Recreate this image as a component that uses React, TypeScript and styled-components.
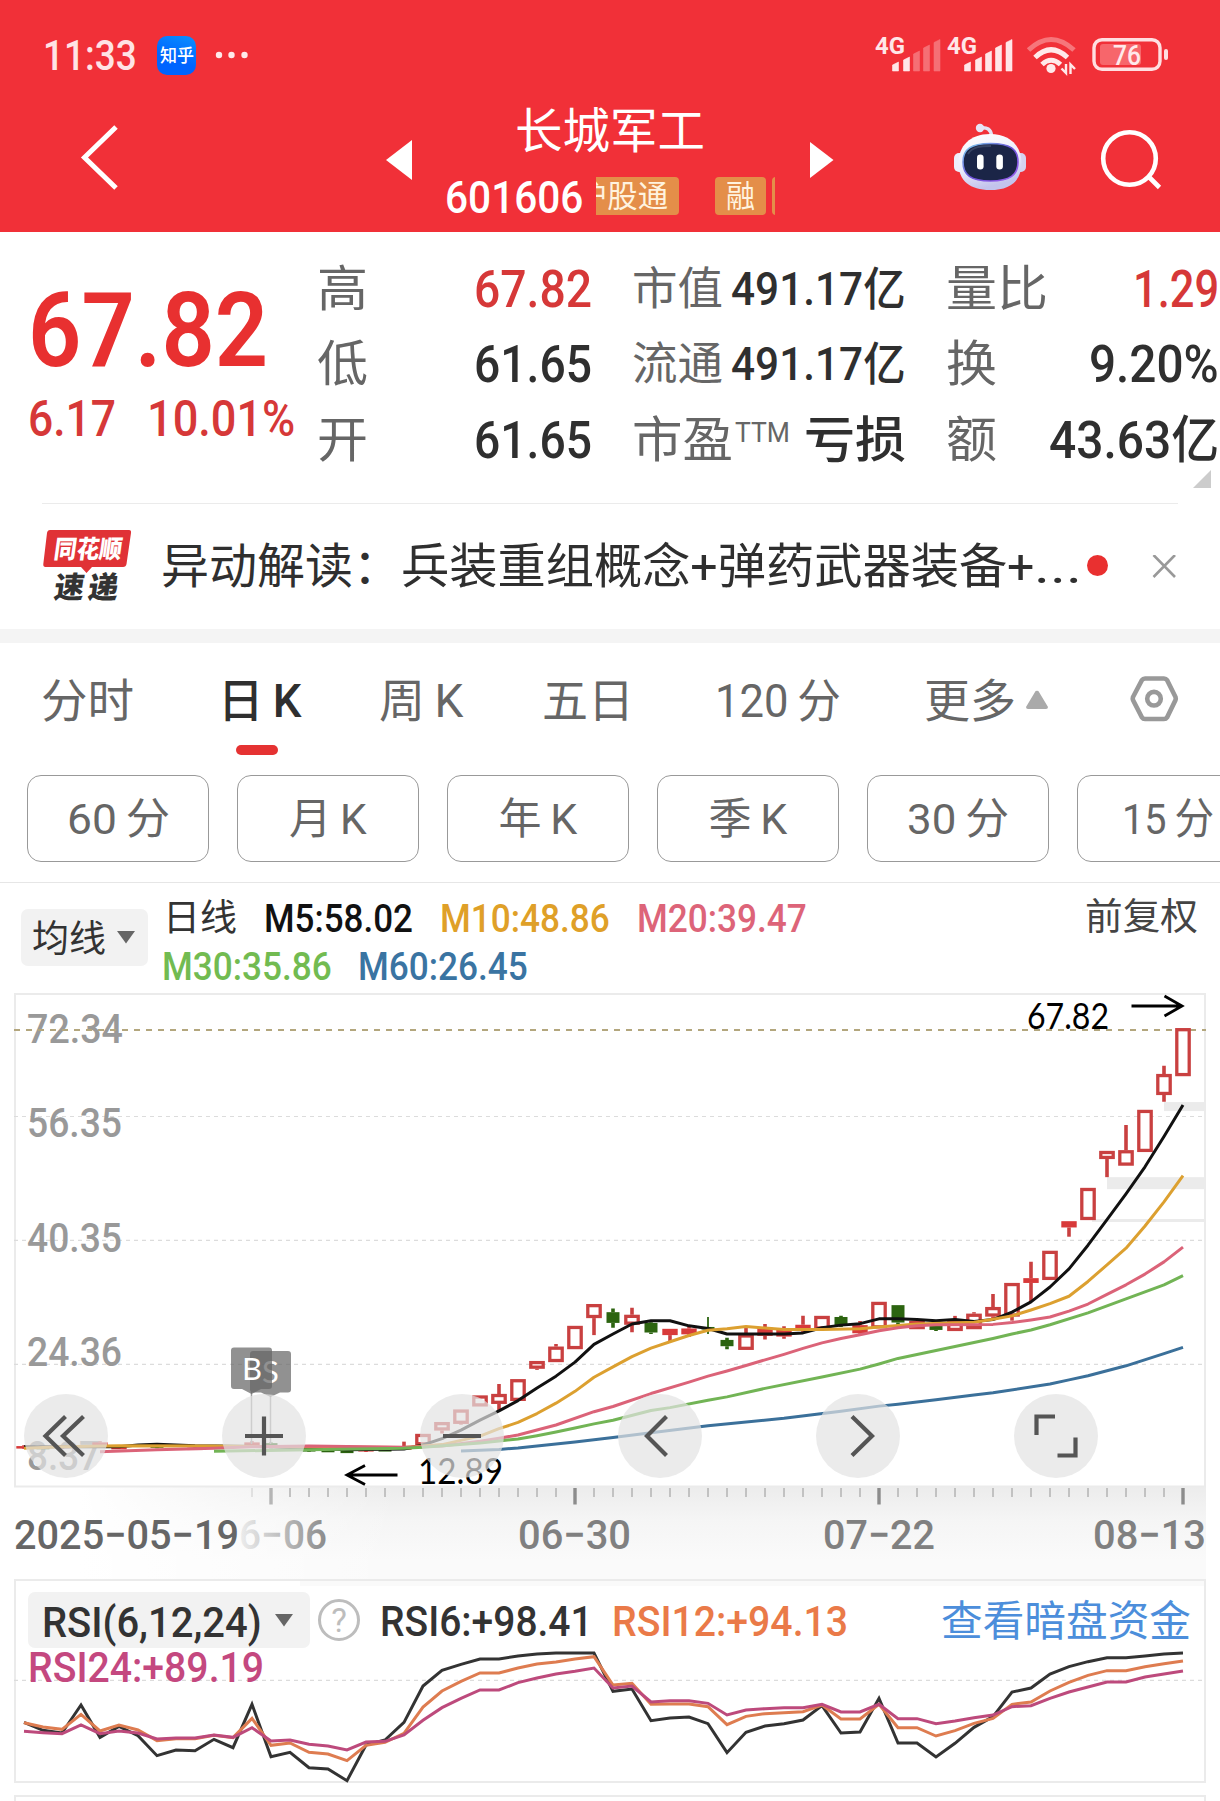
import React, { useLayoutEffect, useRef, useState } from 'react';
import styled, { createGlobalStyle } from 'styled-components';

const FONT = `Roboto, "Noto Sans CJK SC", sans-serif`;

const GlobalStyle = createGlobalStyle`
  body {
    margin: 0;
    background: #fff;
    font-family: ${FONT};
    color: #333;
  }
`;

/* ---------- text fitted to a fixed advance width ---------- */

const FitBox = styled.span<{ $w: number; $size: number; $weight: number; $color: string; $lh: number }>`
  display: block;
  flex: none;
  width: ${p => p.$w}px;
  height: ${p => p.$lh}px;
  line-height: ${p => p.$lh}px;
  font-size: ${p => p.$size}px;
  font-weight: ${p => p.$weight};
  color: ${p => p.$color};
  white-space: nowrap;
`;

const FitInner = styled.span`
  display: inline-block;
  transform-origin: 0 50%;
`;

interface FitProps {
  w: number;
  size: number;
  weight?: number;
  color?: string;
  lh?: number;
  dy?: number;
  children: string;
}

function Fit({ w, size, weight = 400, color = '#333', lh = 50, dy = 2, children }: FitProps) {
  const ref = useRef<HTMLSpanElement>(null);
  const [scale, setScale] = useState(1);
  useLayoutEffect(() => {
    if (ref.current) setScale(w / ref.current.offsetWidth);
  }, [w, size, children]);
  return (
    <FitBox $w={w} $size={size} $weight={weight} $color={color} $lh={lh}>
      <FitInner ref={ref} style={{ transform: `translateY(${dy}px) scaleX(${scale})` }}>{children}</FitInner>
    </FitBox>
  );
}

/* ---------- page ---------- */

const Page = styled.main`
  width: 1220px;
  height: 1801px;
  overflow: hidden;
  background: #fff;
`;

const Header = styled.header`
  height: 232px;
  background: #f13038;
  color: #fff;
`;

const StatusBar = styled.div`
  display: flex;
  align-items: center;
  height: 110px;
  padding-left: 43px;
`;

const AppBadge = styled.span`
  display: flex;
  align-items: center;
  justify-content: center;
  width: 39px;
  height: 39px;
  margin: 0 19px 0 20px;
  border-radius: 10px;
  background: linear-gradient(200deg, #0a90ff, #0064ff 60%);
`;

const StatusIcons = styled.svg`
  margin-left: auto;
`;

const NavBar = styled.nav`
  display: flex;
  height: 122px;
`;

const TitleBlock = styled.div`
  width: 332px;
  margin: 0 34px 0 31px;
`;

const TitleRow = styled.div`
  display: flex;
  justify-content: center;
  margin-top: -7px;
  height: 58px;
`;

const CodeRow = styled.div`
  display: flex;
  align-items: center;
  height: 70px;
  gap: 13px;
  padding-left: 1px;
`;

const TagStrip = styled.div`
  display: flex;
  width: 179px;
  overflow: hidden;
`;

const Tag = styled.span<{ $ml?: number }>`
  flex: none;
  padding: 0 11px;
  margin-left: ${p => p.$ml ?? 0}px;
  border-radius: 4px;
  background: #e48e49;
`;

const Block = styled.svg`
  display: block;
  flex: none;
`;

/* ---------- quote ---------- */

const Quote = styled.section`
  position: relative;
  display: flex;
  height: 271px;
`;

const PriceBlock = styled.div`
  width: 289px;
  padding: 57px 0 0 28px;
`;

const ChangeRow = styled.div`
  display: flex;
  gap: 31px;
  margin-top: 23px;
`;

const Metrics = styled.div`
  display: flex;
  gap: 40px;
  padding-top: 18px;
`;

const MetricColumn = styled.div<{ $w: number }>`
  width: ${p => p.$w}px;
`;

const Metric = styled.div`
  display: flex;
  align-items: center;
  justify-content: space-between;
  height: 75.5px;
`;

const MetricLabel = styled.span`
  display: flex;
  gap: 2px;
`;

const Superscript = styled.span`
  margin-top: -8px;
`;

const Corner = styled.svg`
  position: absolute;
  right: 9px;
  bottom: 15px;
`;

/* ---------- news ---------- */

const News = styled.section`
  display: flex;
  align-items: center;
  height: 125px;
  margin-left: 42px;
  margin-right: 42px;
  border-top: 1px solid #ebebeb;
`;

const NewsText = styled.div`
  display: flex;
  margin: -4px 5px 0 29px;
`;

const Dot = styled.span`
  width: 21px;
  height: 21px;
  margin-top: -2px;
  border-radius: 50%;
  background: #e93030;
`;

const Band = styled.div`
  height: 14px;
  background: #f4f4f4;
`;

/* ---------- tabs ---------- */

const Tabs = styled.div`
  display: flex;
  height: 132px;
  padding-left: 41px;
`;

const Tab = styled.div<{ $gap: number }>`
  display: flex;
  flex-direction: column;
  align-items: center;
  margin-left: ${p => p.$gap}px;
  padding-top: 31px;
`;

const MoreTab = styled.div`
  display: flex;
  gap: 10px;
  margin-left: 83px;
  padding-top: 31px;
`;

const Indicator = styled.span`
  width: 42px;
  height: 10px;
  margin-top: 21px;
  margin-right: 6px;
  border-radius: 5px;
  background: #e53232;
`;

const Pills = styled.div`
  display: flex;
  gap: 28px;
  height: 107px;
  padding-left: 27px;
  overflow: hidden;
  border-bottom: 1px solid #e6e6e6;
`;

const Pill = styled.div`
  display: flex;
  flex: none;
  align-items: center;
  justify-content: center;
  box-sizing: border-box;
  width: 182px;
  height: 87px;
  padding-bottom: 3px;
  border: 1px solid #999;
  border-radius: 14px;
`;

/* ---------- legend ---------- */

const Legend = styled.div`
  display: flex;
  height: 110px;
`;

const Chip = styled.div<{ $w: number; $h: number }>`
  display: flex;
  align-items: center;
  box-sizing: border-box;
  flex: none;
  width: ${p => p.$w}px;
  height: ${p => p.$h}px;
  border-radius: 7px;
  background: #f2f2f2;
`;

const MaChip = styled(Chip)`
  gap: 11px;
  margin: 26px 14px 0 21px;
  padding-left: 11px;
`;

const LegendLines = styled.div`
  flex: 1;
  padding-top: 10px;
`;

const LegendLine = styled.div<{ $pad?: number; $gap?: number }>`
  display: flex;
  gap: ${p => p.$gap ?? 25}px;
  padding-left: ${p => p.$pad ?? 0}px;
`;

const Adjust = styled.div`
  padding: 8px 22px 0 0;
`;

/* ---------- charts ---------- */

const ChartArea = styled.section`
  position: relative;
  height: 586px;
`;

const ControlBar = styled.div`
  position: absolute;
  left: 24px;
  top: 401px;
  display: flex;
  gap: 114px;
`;

const RoundButton = styled.button`
  width: 84px;
  height: 84px;
  padding: 0;
  border: 0;
  border-radius: 50%;
  background: rgba(227, 227, 227, 0.7);
`;

const RsiPanel = styled.section`
  position: relative;
  box-sizing: border-box;
  width: 1192px;
  height: 204px;
  margin-left: 14px;
  border: 2px solid #ebebeb;
`;

const RsiPlot = styled.svg`
  position: absolute;
  left: -16px;
  top: -2px;
`;

const RsiHeader = styled.div`
  position: relative;
  display: flex;
  align-items: center;
  height: 56px;
  margin-top: 11px;
  padding-left: 12px;
`;

const RsiChip = styled(Chip)`
  gap: 13px;
  padding-left: 14px;
  margin-right: 8px;
`;

const Help = styled.span`
  box-sizing: border-box;
  width: 42px;
  height: 42px;
  margin-right: 20px;
  border: 3px solid #bdbdbd;
  border-radius: 50%;
  color: #bdbdbd;
  font-size: 33px;
  line-height: 38px;
  text-align: center;
`;

const LinkText = styled.a`
  margin-left: auto;
  margin-right: 13px;
`;

const RsiSecond = styled.div`
  position: relative;
  padding-left: 12px;
  margin-top: -5px;
`;

const NextPanel = styled.div`
  width: 1188px;
  height: 20px;
  margin: 12px 0 0 14px;
  border: 2px solid #ebebeb;
`;

const GRAY = '#666';
const DARK = '#2f2f2f';
const UP = '#c94040';
const DOWN = '#2c6410';

const xAt = (i: number) => 24 + 19 * i;
const yAt = (v: number) => 980 + v / 2.7034;
const yRsi = (v: number) => 1560 + v / 3;

type Candle = [number, number, number, number, number, ('u' | 's' | 'd')];
// index, body top, body bottom, wick top, wick bottom, kind: hollow up, solid up, down
const candles: Candle[] = [
  [0, 1260, 1266, 1258, 1268, 's'], [1, 1262, 1266, 1260, 1268, 'd'], [2, 1259, 1263, 1258, 1266, 's'],
  [4, 1250, 1262, 1247, 1264, 's'], [5, 1262, 1266, 1260, 1268, 's'], [7, 1258, 1262, 1257, 1266, 'd'],
  [9, 1264, 1268, 1262, 1270, 's'], [12, 1250, 1262, 1247, 1264, 's'], [13, 1252, 1262, 1250, 1266, 'd'],
  [15, 1268, 1273, 1266, 1275, 'd'], [16, 1270, 1274, 1268, 1274, 'd'], [17, 1272, 1279, 1270, 1279, 'd'],
  [18, 1268, 1272, 1266, 1276, 's'], [19, 1268, 1272, 1266, 1273, 'd'], [20, 1262, 1270, 1248, 1270, 's'],
  [21, 1227, 1258, 1227, 1258, 'u'], [22, 1195, 1218, 1195, 1226, 'u'], [23, 1161, 1200, 1161, 1202, 'u'],
  [24, 1123, 1153, 1123, 1153, 'u'], [25, 1119, 1146, 1092, 1165, 'u'], [26, 1079, 1138, 1079, 1138, 'u'],
  [27, 1030, 1051, 1030, 1054, 'u'], [28, 991, 1033, 984, 1033, 'u'], [29, 935, 998, 935, 998, 'u'],
  [30, 876, 914, 876, 960, 'u'], [31, 898, 927, 888, 940, 'd'], [32, 905, 932, 886, 952, 'u'],
  [33, 927, 953, 925, 957, 'd'], [34, 943, 960, 943, 977, 's'], [35, 942, 958, 938, 965, 's'],
  [36, 938, 944, 911, 957, 'd'], [37, 973, 990, 967, 998, 'd'], [38, 958, 1000, 940, 1000, 'u'],
  [39, 940, 962, 930, 972, 's'], [40, 943, 964, 936, 970, 's'], [41, 932, 945, 908, 955, 's'],
  [42, 908, 945, 908, 945, 'u'], [43, 911, 933, 908, 938, 'd'], [44, 933, 955, 922, 960, 's'],
  [45, 870, 942, 870, 942, 'u'], [46, 879, 926, 879, 933, 'd'], [47, 922, 944, 922, 944, 'u'],
  [48, 932, 946, 930, 949, 'd'], [49, 922, 949, 908, 949, 'u'], [50, 902, 944, 898, 944, 'u'],
  [51, 884, 910, 849, 915, 'u'], [52, 819, 910, 819, 921, 'u'], [53, 806, 819, 762, 868, 's'],
  [54, 732, 811, 732, 811, 'u'], [55, 652, 669, 652, 694, 's'], [56, 562, 649, 562, 649, 'u'],
  [57, 462, 484, 462, 533, 'u'], [58, 460, 502, 392, 502, 'u'], [59, 351, 465, 351, 465, 'u'],
  [60, 254, 311, 232, 329, 'u'], [61, 130, 260, 130, 260, 'u'],
];

type Pt = [number, number];
const averages: { color: string; pts: Pt[] }[] = [
  { color: '#111', pts: [[0, 1262], [5, 1262], [6, 1257], [7, 1255], [9, 1259], [13, 1262], [17, 1270], [20, 1268], [21, 1257], [22, 1240], [23, 1217], [24, 1190], [25, 1165], [26, 1137], [27, 1103], [28, 1071], [29, 1033], [30, 985], [31, 957], [32, 930], [33, 921], [34, 921], [35, 935], [36, 942], [37, 957], [40, 957], [41, 954], [42, 940], [43, 933], [44, 929], [45, 916], [46, 916], [47, 918], [48, 921], [49, 918], [50, 923], [51, 918], [52, 898], [53, 870], [54, 830], [55, 781], [56, 717], [57, 648], [58, 578], [59, 505], [60, 423], [61, 338]] },
  { color: '#dca030', pts: [[0, 1266], [2, 1262], [5, 1259], [10, 1260], [20, 1264], [22, 1256], [24, 1233], [25, 1213], [26, 1196], [27, 1172], [28, 1144], [29, 1112], [30, 1074], [31, 1046], [32, 1018], [33, 995], [34, 978], [35, 961], [36, 947], [37, 943], [38, 937], [39, 941], [40, 945], [42, 945], [44, 943], [45, 938], [47, 930], [50, 925], [51, 917], [52, 908], [53, 892], [54, 875], [55, 855], [56, 815], [57, 770], [58, 725], [59, 665], [60, 600], [61, 529]] },
  { color: '#db6378', pts: [[4, 1275], [7, 1270], [10, 1266], [12, 1262], [15, 1260], [20, 1263], [22, 1260], [24, 1247], [25, 1239], [26, 1230], [28, 1203], [30, 1167], [31, 1153], [33, 1118], [35, 1087], [36, 1071], [37, 1057], [38, 1042], [39, 1027], [40, 1012], [41, 996], [42, 981], [43, 969], [44, 959], [45, 948], [46, 940], [47, 935], [48, 932], [51, 931], [52, 926], [53, 919], [54, 911], [55, 895], [56, 876], [57, 850], [58, 824], [59, 795], [60, 762], [61, 722]] },
  { color: '#72b455', pts: [[10, 1274], [15, 1270], [20, 1266], [21, 1263], [24, 1252], [25, 1246], [26, 1241], [27, 1232], [28, 1222], [29, 1211], [30, 1200], [31, 1190], [33, 1164], [34, 1156], [36, 1136], [37, 1127], [39, 1104], [42, 1073], [44, 1052], [45, 1038], [46, 1023], [50, 980], [51, 969], [52, 957], [53, 946], [54, 932], [56, 900], [58, 862], [60, 824], [61, 799]] },
  { color: '#3b709a', pts: [[23, 1273], [25, 1269], [26, 1265], [29, 1249], [31, 1237], [33, 1224], [36, 1205], [40, 1185], [43, 1166], [45, 1152], [46, 1147], [48, 1135], [50, 1122], [51, 1116], [54, 1092], [55, 1081], [56, 1070], [58, 1043], [60, 1010], [61, 993]] },
];

const rsi = [
  { color: '#333', values: [487, 511, 519, 435, 532, 499, 527, 587, 570, 572, 538, 563, 433, 590, 577, 623, 627, 662, 555, 540, 487, 378, 331, 313, 297, 297, 288, 282, 279, 279, 279, 394, 387, 482, 474, 471, 491, 578, 517, 498, 491, 480, 437, 519, 516, 415, 549, 549, 591, 550, 502, 470, 396, 384, 342, 320, 305, 293, 293, 288, 282, 279] },
  { color: '#de7c50', values: [488, 501, 508, 463, 513, 495, 510, 542, 536, 536, 526, 533, 475, 556, 549, 577, 582, 602, 556, 547, 520, 441, 393, 364, 339, 339, 324, 312, 306, 297, 290, 375, 370, 433, 432, 432, 440, 494, 469, 461, 458, 455, 435, 477, 477, 433, 503, 503, 528, 512, 490, 475, 433, 426, 393, 367, 346, 332, 332, 320, 311, 303] },
  { color: '#bd4a7c', values: [514, 518, 521, 495, 521, 513, 519, 537, 534, 534, 525, 532, 503, 543, 540, 553, 558, 570, 546, 544, 525, 481, 443, 415, 390, 390, 368, 354, 342, 334, 324, 384, 378, 426, 422, 422, 430, 465, 450, 446, 443, 443, 433, 456, 456, 433, 476, 476, 491, 483, 473, 465, 440, 437, 415, 396, 381, 366, 366, 351, 342, 333] },
];

function StatusGlyphs() {
  const bars = [[0, 62], [11, 57], [21, 51], [31, 45], [41.5, 39.5]];
  const signal = (x: number, strong: number) =>
    bars.map(([dx, top], i) => (
      <path key={`${x}-${i}`} d={`M${x + dx} 71V${top + 3}L${x + dx + 6} ${top}V71Z`} fill="#ffe6e8" stroke="#ffe6e8" strokeWidth="0.6" strokeLinejoin="round" opacity={i < strong ? 1 : 0.35} />
    ));
  return (
    <StatusIcons width="350" height="110" viewBox="870 0 350 110">
      <g fontFamily={FONT} fontWeight="700" fontSize="24" fill="#ffe6e8">
        <text x="875" y="54" textLength="30" lengthAdjust="spacingAndGlyphs">4G</text>
        <text x="947" y="54" textLength="30" lengthAdjust="spacingAndGlyphs">4G</text>
      </g>
      {signal(892.5, 2)}
      {signal(964.5, 5)}
      <g fill="none" stroke="#ffe9ea" strokeWidth="5">
        <path d="M1028.5 50Q1051 29 1074 50" opacity="0.38" />
        <path d="M1035 57.5Q1051 42 1067.500 57.500" />
        <path d="M1042 64.500Q1051 56 1060.500 64.500" />
      </g>
      <circle cx="1051" cy="68.500" r="4.600" fill="#ffe9ea" />
      <path d="M1066 64V73L1061.500 68.500M1070.500 74V64.500L1075 69" fill="none" stroke="#ffe9ea" strokeWidth="2.400" />
      <rect x="1094" y="39.700" width="66" height="29.600" rx="8" fill="none" stroke="#ffdfe1" strokeWidth="3.400" />
      <rect x="1100" y="44" width="41" height="21" rx="3" fill="#f7666b" />
      <rect x="1164" y="49" width="4" height="11" rx="2" fill="#ffdfe1" />
      <text x="1113" y="64.500" fontFamily={FONT} fontSize="27" fontWeight="500" fill="#ffe9ea" textLength="28" lengthAdjust="spacingAndGlyphs">76</text>
    </StatusIcons>
  );
}

function Robot() {
  return (
    <Block width="80" height="122" viewBox="950 110 80 122">
      <defs>
        <linearGradient id="shell" x1="0" y1="0" x2="0.3" y2="1">
          <stop offset="0" stopColor="#fff" />
          <stop offset="0.6" stopColor="#ececfb" />
          <stop offset="1" stopColor="#c3c3ec" />
        </linearGradient>
        <linearGradient id="rim" x1="0" y1="0" x2="1" y2="1">
          <stop offset="0" stopColor="#7ed3ee" />
          <stop offset="0.5" stopColor="#6a50d8" />
          <stop offset="1" stopColor="#a060f0" />
        </linearGradient>
      </defs>
      <path d="M980 128C987 127 991 129 991.500 136" fill="none" stroke="#e4e2f4" strokeWidth="3.600" />
      <circle cx="980" cy="128" r="4.200" fill="#e6e4f6" />
      <rect x="954" y="153" width="12" height="19" rx="5" fill="#eeedfb" />
      <rect x="1014" y="153" width="12" height="19" rx="5" fill="#d5d3f0" />
      <path d="M990 134C1010 134 1021.500 146 1021.500 163C1021.500 181 1010 190 990 190C970 190 958.500 181 958.500 163C958.500 146 970 134 990 134Z" fill="url(#shell)" />
      <path d="M990.500 143.500C1010 143.500 1018 149 1018 162C1018 175 1010 181 990.500 181C971 181 963 175 963 162C963 149 971 143.500 990.500 143.500Z" fill="#1b2547" stroke="url(#rim)" strokeWidth="1.600" />
      <path d="M968 154C972 147 980 146 991 146" fill="none" stroke="#4b5877" strokeWidth="2" opacity="0.6" />
      <rect x="977" y="154.500" width="6.600" height="15" rx="3.300" fill="#fff" />
      <rect x="996.300" y="154.500" width="6.600" height="15" rx="3.300" fill="#fff" />
    </Block>
  );
}

function Kline() {
  const dates: [string, number, number][] = [['06−30', 518, 113], ['07−22', 823, 112], ['08−13', 1093, 113]];
  const prices: [string, number, number][] = [['72.34', 170, 96], ['56.35', 423, 95], ['40.35', 733, 95], ['24.36', 1041, 95], ['8.37', 1322, 73]];
  return (
    <Block width="1220" height="586" viewBox="0 993 1220 586">
      <defs>
        <linearGradient id="shade" x1="0" y1="0" x2="0" y2="1">
          <stop offset="0" stopColor="#ececec" />
          <stop offset="0.35" stopColor="#f5f5f5" />
          <stop offset="0.8" stopColor="#fafafa" />
        </linearGradient>
        <linearGradient id="leftFade" gradientUnits="userSpaceOnUse" x1="80" y1="0" x2="400" y2="0">
          <stop offset="0" stopColor="#fff" />
          <stop offset="1" stopColor="#fff" stopOpacity="0" />
        </linearGradient>
        <linearGradient id="dateFade" gradientUnits="userSpaceOnUse" x1="238" y1="0" x2="326" y2="0">
          <stop offset="0" stopColor="#808080" stopOpacity="0.1" />
          <stop offset="1" stopColor="#808080" stopOpacity="0.9" />
        </linearGradient>
      </defs>
      <rect x="14" y="1487" width="1192" height="92" fill="url(#shade)" />
      <rect x="14" y="1487" width="400" height="92" fill="url(#leftFade)" />
      <rect x="15" y="994" width="1190" height="492.500" fill="none" stroke="#ebebeb" strokeWidth="2" />
      {[369, 704, 1039].map(v => (
        <path key={v} d={`M14 ${yAt(v)}H1204`} stroke="#dcdcdc" strokeWidth="1.200" strokeDasharray="4 4" />
      ))}
      <g fontFamily={FONT} fontSize="41.500" fontWeight="500" fill="#999">
        {prices.map(([t, v, w]) => (
          <text key={t} x="27" y={yAt(v) + 0.5} textLength={w} lengthAdjust="spacingAndGlyphs">{t}</text>
        ))}
      </g>
      <path d={`M14 ${yAt(135)}H1206`} stroke="#b3a67d" strokeWidth="2" strokeDasharray="6 6" />
      <g fill="#ebebeb">
        <rect x="1164" y={yAt(330)} width="42" height="9" />
        <rect x="1107" y={yAt(533)} width="99" height="12" />
        <rect x="1092" y={yAt(646)} width="114" height="3" />
      </g>
      {candles.map(([i, top, bottom, high, low, kind]) => {
        const x = xAt(i);
        const color = kind === 'd' ? DOWN : UP;
        const h = Math.max(2.5, yAt(bottom) - yAt(top));
        return (
          <g key={i}>
            <path d={`M${x} ${yAt(high)}V${yAt(top)}M${x} ${yAt(bottom)}V${yAt(low)}`} stroke={color} strokeWidth={i === 36 ? 1.8 : 3.6} />
            {kind === 'u'
              ? <rect x={x - 6.2} y={yAt(top) + 1.600} width="12.400" height={Math.max(1, h - 3.2)} fill="#fff" stroke={color} strokeWidth="3.300" />
              : <rect x={x - (kind === 'd' ? 6.500 : 7.700)} y={yAt(top)} width={kind === 'd' ? 13 : 15.400} height={h} fill={kind === 'd' ? DOWN : '#d83a3a'} />}
          </g>
        );
      })}
      {averages.map(line => (
        <polyline key={line.color} points={line.pts.map(([i, v]) => `${xAt(i)},${yAt(v)}`).join(' ')} fill="none" stroke={line.color} strokeWidth="3" strokeLinejoin="round" />
      ))}
      <g stroke="#9a9a9a" strokeWidth="1.500">
        <path d="M251.500 1392V1444M270.500 1396V1444" />
      </g>
      <g fill="#666" fillOpacity="0.720">
        <path d="M254 1351H288A3 3 0 0 1 291 1354V1389.500A3 3 0 0 1 288 1392.500H280L270.500 1397L261 1392.500H253A3 3 0 0 1 250 1389.500V1354A3 3 0 0 1 253 1351Z" />
      </g>
      <text x="262" y="1383" fontFamily="Lato, sans-serif" fontSize="31" fill="#fff">S</text>
      <path d="M234 1347.500H269A3 3 0 0 1 272 1350.500V1386A3 3 0 0 1 269 1389H261L251.500 1394L242 1389H234A3 3 0 0 1 231 1386V1350.500A3 3 0 0 1 234 1347.500Z" fill="#666" fillOpacity="0.720" />
      <text x="242" y="1379.500" fontFamily="Lato, sans-serif" fontSize="31" fill="#fff">B</text>
      <g fontFamily="Lato, sans-serif" fontSize="36" fill="#000">
        <text x="1027" y="1028.500" textLength="82" lengthAdjust="spacingAndGlyphs">67.82</text>
        <text x="418" y="1483.500" textLength="85" lengthAdjust="spacingAndGlyphs">12.89</text>
      </g>
      <g fill="none" stroke="#000" strokeWidth="2.800">
        <path d="M1131.500 1006H1182M1164.500 996L1182 1006L1164.500 1016" />
        <path d="M397.500 1475H347M365 1465.500L347 1475L365 1484.500" />
      </g>
      {Array.from({ length: 50 }, (_, k) => k + 12).map(i => {
        const major = (i - 13) % 16 === 0;
        return (
          <path key={i} d={`M${xAt(i)} 1488V${major ? 1504.500 : 1497}`} stroke={major ? '#8c8c8c' : '#bdbdbd'} strokeWidth={major ? 3.400 : 1.800} opacity={i === 12 ? 0.4 : i === 13 ? 0.6 : 1} />
        );
      })}
      <g fontFamily={FONT} fontSize="41" fontWeight="500" fill="#808080">
        <text x="14" y="1549" fill="#666" textLength="225" lengthAdjust="spacingAndGlyphs">2025−05−19</text>
        <text x="239" y="1549" fill="url(#dateFade)" textLength="88" lengthAdjust="spacingAndGlyphs">6−06</text>
        {dates.map(([t, x, w]) => (
          <text key={t} x={x} y="1549" textLength={w} lengthAdjust="spacingAndGlyphs">{t}</text>
        ))}
      </g>
    </Block>
  );
}

const controls = [
  { label: 'first', d: 'M59.500 22.500L39 42L59.500 61.500M41.500 22.500L21.500 42L41.500 61.500' },
  { label: 'zoom in', d: 'M42 22.500V61.500M23 42H61' },
  { label: 'zoom out', d: 'M23 42H61' },
  { label: 'previous', d: 'M48.500 22.500L29 42L48.500 61.500' },
  { label: 'next', d: 'M36 22.500L56 42L36 61.500' },
  { label: 'expand', d: 'M41 22.500H22.500V41M43.500 61.500H61.500V43.500' },
];

const THIN = '\u2009';
const pills: [string, number][] = [
  [`60${THIN}分`, 103], [`月${THIN}K`, 78], [`年${THIN}K`, 79], [`季${THIN}K`, 79], [`30${THIN}分`, 102], [`15${THIN}分`, 92],
];

export default function App() {
  return (
    <Page>
      <GlobalStyle />
      <Header>
        <StatusBar>
          <Fit w={94} size={42} weight={500} color="#ffe3e5" dy={1}>11:33</Fit>
          <AppBadge><Fit w={34} size={18} weight={500} color="#fff" lh={36} dy={1}>知乎</Fit></AppBadge>
          <Block width="34" height="8" viewBox="0 0 34 8" fill="#ffe9ea">
            <circle cx="4" cy="4" r="3.200" /><circle cx="16.500" cy="4" r="3.200" /><circle cx="29.500" cy="4" r="3.200" />
          </Block>
          <StatusGlyphs />
        </StatusBar>
        <NavBar>
          <Block width="413" height="122" viewBox="0 110 413 122">
            <path d="M116 127L84.500 157.500L116 188" fill="none" stroke="#fff" strokeWidth="5" />
            <path d="M412 140V180L386 160Z" fill="#fff" />
          </Block>
          <TitleBlock>
            <TitleRow><Fit w={190} size={48} color="#fff" lh={50} dy={3.5}>长城军工</Fit></TitleRow>
            <CodeRow>
              <Fit w={138} size={45} weight={500} color="#fff" dy={2}>601606</Fit>
              <TagStrip>
                <Tag $ml={-30}><Fit w={91} size={31} color="#fff3df" lh={38} dy={1}>沪股通</Fit></Tag>
                <Tag $ml={36}><Fit w={29} size={31} color="#fff3df" lh={38} dy={1}>融</Fit></Tag>
                <Tag $ml={6}><Fit w={29} size={31} color="#fff3df" lh={38}>&nbsp;</Fit></Tag>
              </TagStrip>
            </CodeRow>
          </TitleBlock>
          <Block width="140" height="122" viewBox="810 110 140 122">
            <path d="M810 142V178L833.500 160Z" fill="#fff" />
          </Block>
          <Robot />
          <Block width="190" height="122" viewBox="1030 110 190 122" fill="none" stroke="#fff" strokeWidth="4.600">
            <circle cx="1129.500" cy="158.500" r="26.300" />
            <path d="M1149 177L1159.500 187.500" />
          </Block>
        </NavBar>
      </Header>

      <Quote>
        <PriceBlock>
          <Fit w={240} size={104} weight={600} color="#e83030" lh={80} dy={1.5}>67.82</Fit>
          <ChangeRow>
            <Fit w={88} size={50} weight={500} color="#d63838" dy={1.5}>6.17</Fit>
            <Fit w={148} size={50} weight={500} color="#d63838" dy={1.5}>10.01%</Fit>
          </ChangeRow>
        </PriceBlock>
        <Metrics>
          <MetricColumn $w={275}>
            <Metric><Fit w={51} size={49} color={GRAY}>高</Fit><Fit w={118} size={51} weight={500} color="#d63838">67.82</Fit></Metric>
            <Metric><Fit w={51} size={49} color={GRAY}>低</Fit><Fit w={118} size={51} weight={500} color={DARK}>61.65</Fit></Metric>
            <Metric><Fit w={51} size={49} color={GRAY}>开</Fit><Fit w={118} size={51} weight={500} color={DARK}>61.65</Fit></Metric>
          </MetricColumn>
          <MetricColumn $w={274}>
            <Metric><Fit w={91} size={45} color={GRAY}>市值</Fit><Fit w={175} size={46} weight={500} color={DARK} dy={1}>491.17亿</Fit></Metric>
            <Metric><Fit w={91} size={45} color={GRAY}>流通</Fit><Fit w={175} size={46} weight={500} color={DARK} dy={1}>491.17亿</Fit></Metric>
            <Metric>
              <MetricLabel>
                <Fit w={101} size={49} color={GRAY}>市盈</Fit>
                <Superscript><Fit w={55} size={27} color={GRAY}>TTM</Fit></Superscript>
              </MetricLabel>
              <Fit w={102} size={49} weight={500} color={DARK}>亏损</Fit>
            </Metric>
          </MetricColumn>
          <MetricColumn $w={273}>
            <Metric><Fit w={102} size={49} color={GRAY}>量比</Fit><Fit w={86} size={51} weight={500} color="#d63838">1.29</Fit></Metric>
            <Metric><Fit w={51} size={49} color={GRAY}>换</Fit><Fit w={130} size={51} weight={500} color={DARK}>9.20%</Fit></Metric>
            <Metric><Fit w={51} size={49} color={GRAY}>额</Fit><Fit w={170} size={51} weight={500} color={DARK}>43.63亿</Fit></Metric>
          </MetricColumn>
        </Metrics>
        <Corner width="18" height="18" viewBox="0 0 18 18"><path d="M18 0V18H0Z" fill="#ccc" /></Corner>
      </Quote>

      <News>
        <Block width="90" height="76" viewBox="42 529 90 76">
          <path d="M50 530H129Q131.500 530 131 533L126.500 564Q126 567 123 567H92L86.500 573L81 567H45.500Q43 567 43.300 564L47 533Q47.500 530 50 530Z" fill="#e03236" />
          <g fontFamily={FONT} fontWeight="900">
            <text transform="translate(53 557.500) skewX(-8)" fontSize="25" fill="#fff" textLength="68" lengthAdjust="spacingAndGlyphs">同花顺</text>
            <text transform="translate(53 598) skewX(-8)" fontSize="30" fill="#333" textLength="64" lengthAdjust="spacing">速递</text>
          </g>
        </Block>
        <NewsText>
          <Fit w={240} size={48} color={DARK}>异动解读：</Fit>
          <Fit w={633} size={48} color={DARK}>兵装重组概念+弹药武器装备+</Fit>
          <Fit w={48} size={48} color={DARK}>...</Fit>
        </NewsText>
        <Dot />
        <Block width="68" height="24" viewBox="1108 555 68 24">
          <path d="M1153.500 555L1175 577M1175 555L1153.500 577" stroke="#999" strokeWidth="2.600" />
        </Block>
      </News>
      <Band />

      <Tabs>
        <Tab $gap={0}><Fit w={93} size={46} color={GRAY}>分时</Fit></Tab>
        <Tab $gap={84}><Fit w={83} size={46} weight={500} color={DARK}>{`日${THIN}K`}</Fit><Indicator /></Tab>
        <Tab $gap={78}><Fit w={84} size={46} color={GRAY}>{`周${THIN}K`}</Fit></Tab>
        <Tab $gap={79}><Fit w={92} size={46} color={GRAY}>五日</Fit></Tab>
        <Tab $gap={81}><Fit w={126} size={46} color={GRAY}>{`120${THIN}分`}</Fit></Tab>
        <MoreTab>
          <Fit w={92} size={46} color={GRAY}>更多</Fit>
          <Block width="22" height="50" viewBox="0 0 22 50"><path d="M11 17Q12 16 13 18L22 33Q22 35 20 35H2Q0 35 0 33L9 18Q10 16 11 17Z" fill="#aaa" /></Block>
        </MoreTab>
        <Block width="172" height="120" viewBox="1048 643 172 120" fill="none" stroke="#999" strokeWidth="4.600">
          <path d="M1145 678.500H1164Q1166 678.500 1167 680L1175.500 697Q1176 698.700 1175.500 700L1167 717.500Q1166 719 1164 719H1145Q1143 719 1142 717.500L1133 700Q1132.500 698.700 1133 697L1142 680Q1143 678.500 1145 678.500Z" />
          <circle cx="1154" cy="698.700" r="6.800" />
        </Block>
      </Tabs>
      <Pills>
        {pills.map(([label, w]) => (
          <Pill key={label}><Fit w={w} size={43} color={GRAY}>{label}</Fit></Pill>
        ))}
      </Pills>

      <Legend>
        <MaChip $w={127} $h={57}>
          <Fit w={74} size={37}>均线</Fit>
          <Block width="18" height="13" viewBox="0 0 18 13"><path d="M0 0H18L9 12.500Z" fill="#666" /></Block>
        </MaChip>
        <LegendLines>
          <LegendLine $pad={1} $gap={27}>
            <Fit w={74} size={37} lh={48}>日线</Fit>
            <Fit w={149} size={38.5} weight={500} color="#111" lh={48}>M5:58.02</Fit>
            <Fit w={170} size={38.5} weight={500} color="#dfa028" lh={48}>M10:48.86</Fit>
            <Fit w={170} size={38.5} weight={500} color="#dd6479" lh={48}>M20:39.47</Fit>
          </LegendLine>
          <LegendLine $gap={26}>
            <Fit w={170} size={38.5} weight={500} color="#72bb51" lh={48}>M30:35.86</Fit>
            <Fit w={170} size={38.5} weight={500} color="#3a74a2" lh={48}>M60:26.45</Fit>
          </LegendLine>
        </LegendLines>
        <Adjust><Fit w={113} size={37} color="#444" lh={48} dy={3}>前复权</Fit></Adjust>
      </Legend>

      <ChartArea>
        <Kline />
        <ControlBar>
          {controls.map(c => (
            <RoundButton key={c.label} aria-label={c.label}>
              <Block width="84" height="84" viewBox="0 0 84 84"><path d={c.d} fill="none" stroke="#555" strokeWidth="4.200" /></Block>
            </RoundButton>
          ))}
        </ControlBar>
      </ChartArea>

      <RsiPanel>
        <RsiPlot width="1220" height="204" viewBox="0 1579 1220 204">
          <rect x="300" y="1581" width="904" height="5" fill="#fafafa" />
          <path d="M14 1680.300H1204" stroke="#dcdcdc" strokeWidth="1.200" strokeDasharray="4 4" />
          {rsi.map(line => (
            <polyline key={line.color} points={line.values.map((v, i) => `${xAt(i)},${yRsi(v)}`).join(' ')} fill="none" stroke={line.color} strokeWidth="3" />
          ))}
        </RsiPlot>
        <RsiHeader>
          <RsiChip $w={282} $h={56}>
            <Fit w={220} size={43} weight={500}>RSI(6,12,24)</Fit>
            <Block width="18" height="13" viewBox="0 0 18 13"><path d="M0 0H18L9 12.500Z" fill="#666" /></Block>
          </RsiChip>
          <Help>?</Help>
          <Fit w={213} size={43} weight={500} dy={1}>RSI6:+98.41</Fit>
          <LegendLine $pad={19}><Fit w={236} size={43} weight={500} color="#ea7a48" dy={1}>RSI12:+94.13</Fit></LegendLine>
          <LinkText><Fit w={250} size={42} color="#4c8edb">查看暗盘资金</Fit></LinkText>
        </RsiHeader>
        <RsiSecond><Fit w={236} size={43} weight={500} color="#c4487f" dy={-1}>RSI24:+89.19</Fit></RsiSecond>
      </RsiPanel>
      <NextPanel />
    </Page>
  );
}
